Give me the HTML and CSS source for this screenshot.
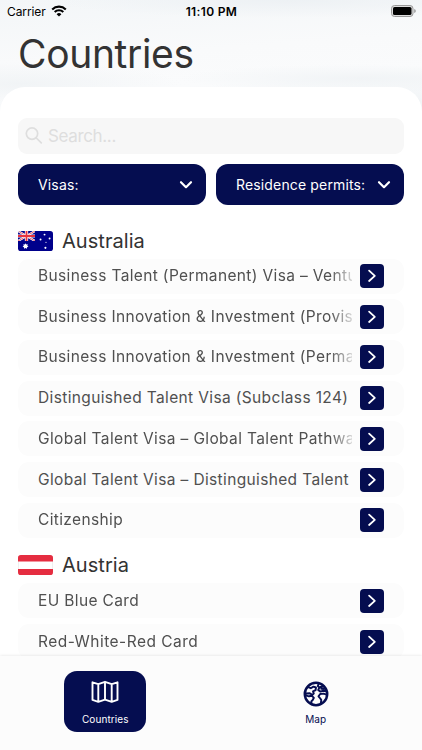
FILE: index.html
```html
<!DOCTYPE html>
<html lang="en">
<head>
<meta charset="utf-8">
<title>Countries</title>
<link rel="stylesheet" href="styles.css">
</head>
<body>
<svg width="0" height="0" class="defs">
  <symbol id="chev" viewBox="0 0 24 24"><path d="M9.1 6.6l5.7 5.2-5.7 5.2" fill="none" stroke="#fff" stroke-width="1.8" stroke-linecap="round" stroke-linejoin="round"/></symbol>
  <symbol id="down" viewBox="0 0 14 10"><path d="M2 2.2l5 5 5-5" fill="none" stroke="#fff" stroke-width="2.2" stroke-linecap="round" stroke-linejoin="round"/></symbol>
</svg>
<div class="app">
  <header class="top">
    <div class="status">
      <div class="carrier"><span>Carrier</span>
        <svg width="16" height="12" viewBox="0 0 16 12"><g fill="none" stroke="#000" stroke-width="2.1"><path d="M1.2 4.4a9.7 9.7 0 0 1 13.6 0"/><path d="M3.7 7a6.1 6.1 0 0 1 8.6 0"/></g><path d="M8 11.6L5.6 9.2a3.4 3.4 0 0 1 4.8 0z"/></svg>
      </div>
      <div class="clock">11:10 PM</div>
      <svg class="battery" width="25" height="12" viewBox="0 0 25 12"><rect x=".5" y=".5" width="21.5" height="11" rx="3" fill="#ddd" stroke="#999"/><rect x="2" y="2" width="18.5" height="8" rx="1.6"/><path d="M23.3 4v4q1.4-.6 1.4-2t-1.4-2z" fill="#888"/></svg>
    </div>
    <h1>Countries</h1>
  </header>
  <main class="sheet">
    <div class="search">
      <svg width="18" height="18" viewBox="0 0 18 18" fill="none" stroke="#dedede" stroke-width="1.7" stroke-linecap="round"><circle cx="7" cy="6.6" r="5.7"/><path d="M11.3 11l5 4.8"/></svg>
      <span>Search...</span>
    </div>
    <div class="filters">
      <div class="filter"><span>Visas:</span><svg width="14" height="10"><use href="#down"/></svg></div>
      <div class="filter"><span>Residence permits:</span><svg width="14" height="10"><use href="#down"/></svg></div>
    </div>
    <section>
      <h2>
        <svg width="35" height="20" viewBox="0 0 36 21" preserveAspectRatio="none"><clipPath id="fc"><rect width="36" height="21" rx="3"/></clipPath><clipPath id="jack"><rect width="17.5" height="10.5"/></clipPath><g clip-path="url(#fc)"><rect width="36" height="21" fill="#00008b"/><g clip-path="url(#jack)"><path d="M0 0l17.5 10.5M17.5 0L0 10.5" stroke="#fff" stroke-width="2.2"/><path d="M0 0l17.5 10.5M17.5 0L0 10.5" stroke="#e23244" stroke-width=".8"/><path d="M8.75 0v10.5M0 5.25h17.5" stroke="#fff" stroke-width="3.4"/><path d="M8.75 0v10.5M0 5.25h17.5" stroke="#e8323f" stroke-width="1.9"/></g><g fill="#fff"><path d="M7.7 12.8l.8 1.4 1.6-.3-.5 1.5 1.2 1-1.5.6v1.6l-1.6-.8-1.5.8-.1-1.6-1.4-.6 1.2-1-.4-1.5 1.5.3z"/><circle cx="27.3" cy="3.8" r="1"/><circle cx="23.2" cy="9" r="1"/><circle cx="32.5" cy="7.8" r="1"/><circle cx="28.8" cy="11.9" r=".6"/><circle cx="28.2" cy="17.7" r="1.1"/></g></g></svg>
        <span>Australia</span>
      </h2>
      <ul>
        <li><span class="name">Business Talent (Permanent) Visa – Ventu</span><svg class="go"><use href="#chev"/></svg></li>
        <li><span class="name">Business Innovation &amp; Investment (Provis</span><svg class="go"><use href="#chev"/></svg></li>
        <li><span class="name">Business Innovation &amp; Investment (Perma</span><svg class="go"><use href="#chev"/></svg></li>
        <li><span class="name whole">Distinguished Talent Visa (Subclass 124)</span><svg class="go"><use href="#chev"/></svg></li>
        <li><span class="name">Global Talent Visa – Global Talent Pathwa</span><svg class="go"><use href="#chev"/></svg></li>
        <li><span class="name whole">Global Talent Visa – Distinguished Talent</span><svg class="go"><use href="#chev"/></svg></li>
        <li><span class="name">Citizenship</span><svg class="go"><use href="#chev"/></svg></li>
      </ul>
    </section>
    <section>
      <h2>
        <svg width="35" height="20" viewBox="0 0 36 21" preserveAspectRatio="none"><rect x=".3" y=".3" width="35.4" height="20.4" rx="3" fill="#fff" stroke="#ddd" stroke-width=".6"/><path d="M0 6.8V3q0-3 3-3h30q3 0 3 3v3.8zM0 14.6v3.4q0 3 3 3h30q3 0 3-3v-3.4z" fill="#e52d40"/></svg>
        <span>Austria</span>
      </h2>
      <ul>
        <li><span class="name">EU Blue Card</span><svg class="go"><use href="#chev"/></svg></li>
        <li><span class="name hyphenated">Red-White-Red Card</span><svg class="go"><use href="#chev"/></svg></li>
      </ul>
    </section>
  </main>
  <nav class="tabs">
    <div class="tab active">
      <svg width="28" height="24" viewBox="0 0 28 24" fill="none" stroke="#fff" stroke-width="1.9" stroke-linejoin="round"><path d="M1.5 2.3l5.8 1.8 6.7-2.3 6.7 2.3 5.8-1.8v17.6l-5.8 2-6.7-2.2-6.7 2.2-5.8-2zM7.3 4.1v17.8M14 1.8v17.9M20.7 4.1v17.8"/></svg>
      <span>Countries</span>
    </div>
    <div class="tab">
      <svg width="26" height="26" viewBox="0 0 26 26" fill="none" stroke="#050d50" stroke-width="1.9" stroke-linejoin="round" stroke-linecap="round"><circle cx="13" cy="13" r="11.2" stroke-width="2.5"/><path d="M5 6.2l2.8 1 2.6-1.6 2.6.9-.4 2.6-2.6 1.3.8 2.2-1.6 1.3-2.4-1.6-3.6.2M2.6 14.4l3.4.9 2.9-.5 2 2-1.2 2.2-1.4 1.4.4 3M15.8 2.6l-1 2.4 1.6 1.6-1.2 2.4 2 1.6 2.4-.8 3.4.2M17.2 6l3.8-.6M18.2 7.7h3.6M23.6 13.6l-3-1-3.4.4-1.7 2.3 1.8 2.2 1 1.6-.7 4"/></svg>
      <span>Map</span>
    </div>
  </nav>
</div>
</body>
</html>
```
FILE: styles.css
```css
* { box-sizing: border-box; margin: 0; padding: 0; }
body { font-family: Inter, "Liberation Sans", sans-serif; background: #fff; overflow: hidden; }
svg { display: block; flex: none; }
.defs { position: absolute; }
.app { width: 422px; height: 750px; display: flex; flex-direction: column; overflow: hidden; }
.top {
  height: 112px; flex: none; margin-bottom: -25px;
  background:
    radial-gradient(ellipse 180px 14px at 85% 70%, #f1f4f6 0%, transparent 100%),
    radial-gradient(ellipse 240px 18px at 68% 0%, #edf1f4 0%, transparent 100%),
    radial-gradient(ellipse 160px 22px at 5% 75%, #f1f4f6 0%, transparent 100%),
    linear-gradient(176deg, #f3f6f8 0%, #f9fafb 45%, #fafbfc 70%, #f2f5f7 92%);
}
.status { height: 22px; display: grid; grid-template-columns: 1fr auto 1fr; align-items: center; padding: 0 6px 0 7px; color: #000; }
.carrier { display: flex; gap: 5px; align-items: center; font-size: 12px; letter-spacing: -.1px; }
.clock { font-size: 12px; font-weight: 600; letter-spacing: .35px; }
.battery { justify-self: end; }
h1 { font-size: 39px; line-height: 48px; font-weight: 400; letter-spacing: -.35px; color: #333; padding: 8px 0 0 18px; }
.sheet { flex: 1; min-height: 0; overflow: hidden; background: #fff; border-radius: 25px 25px 0 0; padding: 31px 18px 0; }
.search { height: 36px; border-radius: 9px; background: #f7f7f7; display: flex; align-items: center; gap: 5px; padding-left: 7px; font-size: 17px; letter-spacing: -.35px; color: #dedede; }
.filters { display: grid; grid-template-columns: 1fr 1fr; gap: 10px; margin-top: 10px; }
.filter { height: 41px; border-radius: 12px; background: #050d50; color: #fff; display: flex; align-items: center; justify-content: space-between; padding: 0 13px 0 20px; font-size: 14px; letter-spacing: .15px; }
section h2 { display: flex; align-items: center; gap: 9px; height: 35px; font-size: 20px; font-weight: 400; letter-spacing: .05px; color: #333; }
section:first-of-type { margin-top: 18px; }
section + section { margin-top: 10px; }
ul { list-style: none; display: grid; gap: 5.7px; padding-top: .6px; }
li { height: 35px; border-radius: 11px; background: #fcfcfc; display: flex; align-items: center; justify-content: space-between; padding: 0 20px; }
.name { width: 314px; white-space: nowrap; font-size: 15.5px; line-height: 24px; letter-spacing: .36px; color: #505050; -webkit-mask-image: linear-gradient(90deg, #000 292px, transparent 320px); mask-image: linear-gradient(90deg, #000 292px, transparent 320px); }
.whole { -webkit-mask-image: none; mask-image: none; }
.hyphenated { letter-spacing: .48px; }
.go { width: 24px; height: 24px; border-radius: 4px; background: #050d50; }
.tabs { height: 94px; flex: none; background: #fcfcfc; box-shadow: 0 0 3px rgba(0,0,0,.12); display: grid; grid-template-columns: 1fr 1fr; justify-items: center; padding: 15px 1px 0 0; position: relative; }
.tab { width: 82px; height: 61px; border-radius: 13px; display: flex; flex-direction: column; align-items: center; justify-content: space-between; padding: 10px 0 6px; font-size: 10px; line-height: 13px; letter-spacing: .1px; color: #050d50; }
.active { background: #050d50; color: #fff; padding-top: 9px; }
```
